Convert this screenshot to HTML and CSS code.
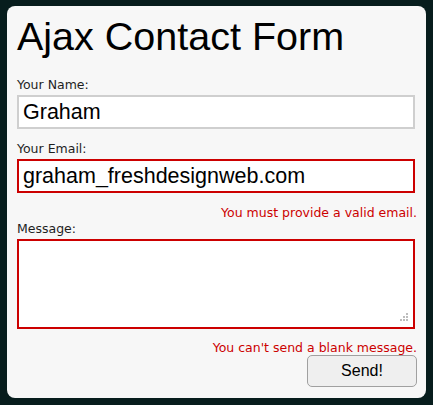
FILE: index.html
```html
<!DOCTYPE html>
<html>
<head>
<meta charset="utf-8">
<title>Ajax Contact Form</title>
<link rel="stylesheet" href="styles.css">
</head>
<body>
<div class="page">
  <form class="card">
    <h1 class="title">Ajax Contact Form</h1>
    <label class="label label-first" for="name">Your Name:</label>
    <input class="field" id="name" type="text" value="Graham">
    <label class="label" for="email">Your Email:</label>
    <input class="field field-error" id="email" type="text" value="graham_freshdesignweb.com">
    <div class="error error-email">You must provide a valid email.</div>
    <label class="label label-message" for="message">Message:</label>
    <div class="area-wrap">
      <textarea class="area field-error" id="message"></textarea>
      <svg class="grip" width="9" height="9" viewBox="0 0 9 9">
        <rect x="7" y="0" width="2" height="2" fill="#bdbdbd"/>
        <rect x="4" y="3" width="2" height="2" fill="#bdbdbd"/>
        <rect x="7" y="3" width="2" height="2" fill="#bdbdbd"/>
        <rect x="1" y="6" width="2" height="2" fill="#bdbdbd"/>
        <rect x="4" y="6" width="2" height="2" fill="#bdbdbd"/>
        <rect x="7" y="6" width="2" height="2" fill="#bdbdbd"/>
      </svg>
    </div>
    <div class="error error-message">You can't send a blank message.</div>
    <div class="actions">
      <button class="send" type="button">Send!</button>
    </div>
  </form>
</div>
</body>
</html>
```

FILE: styles.css
```css
html, body {
  margin: 0;
  padding: 0;
  background: #071d1d;
}

.page {
  padding: 6px 7px 7px 7px;
}

.card {
  display: block;
  background: #f7f7f7;
  border-radius: 8px;
  padding: 10px 9px 11px 10px;
  font-family: "DejaVu Sans", Verdana, sans-serif;
  font-size: 12.5px;
  color: #1e1e1e;
}

.title {
  margin: 0;
  font-family: "Liberation Sans", Arial, sans-serif;
  font-weight: normal;
  font-size: 39.5px;
  line-height: 40px;
  color: #000;
}

.label {
  display: block;
  line-height: 15px;
  margin: 12px 0 3px 0;
}

.label-first {
  margin-top: 21px;
}

.label-message {
  margin-top: 1px;
}

.field {
  display: block;
  box-sizing: border-box;
  width: 398px;
  height: 34px;
  margin: 0;
  padding: 0 4px;
  border: 2px solid #cfcfcf;
  background: #fff;
  font-family: "Liberation Sans", Arial, sans-serif;
  font-size: 21.5px;
  color: #000;
  outline: none;
}

.field-error {
  border: 2px solid #cc0000;
}

.error {
  line-height: 15px;
  text-align: right;
  color: #cc0000;
  margin-top: 12px;
}

.error-message {
  margin-top: 11px;
}

.area-wrap {
  position: relative;
  width: 398px;
  height: 90px;
}

.area {
  display: block;
  box-sizing: border-box;
  width: 398px;
  height: 90px;
  margin: 0;
  padding: 4px;
  background: #fff;
  resize: none;
  outline: none;
  font-family: "Liberation Sans", Arial, sans-serif;
  font-size: 16px;
}

.grip {
  position: absolute;
  right: 7px;
  bottom: 7px;
}

.actions {
  display: flex;
  justify-content: flex-end;
}

.send {
  box-sizing: border-box;
  width: 110px;
  height: 32px;
  margin: 0;
  padding: 0;
  border: 1px solid #a0a0a0;
  border-radius: 5px;
  background: #efefef;
  font-family: "Liberation Sans", Arial, sans-serif;
  font-size: 16px;
  color: #000;
}
```
